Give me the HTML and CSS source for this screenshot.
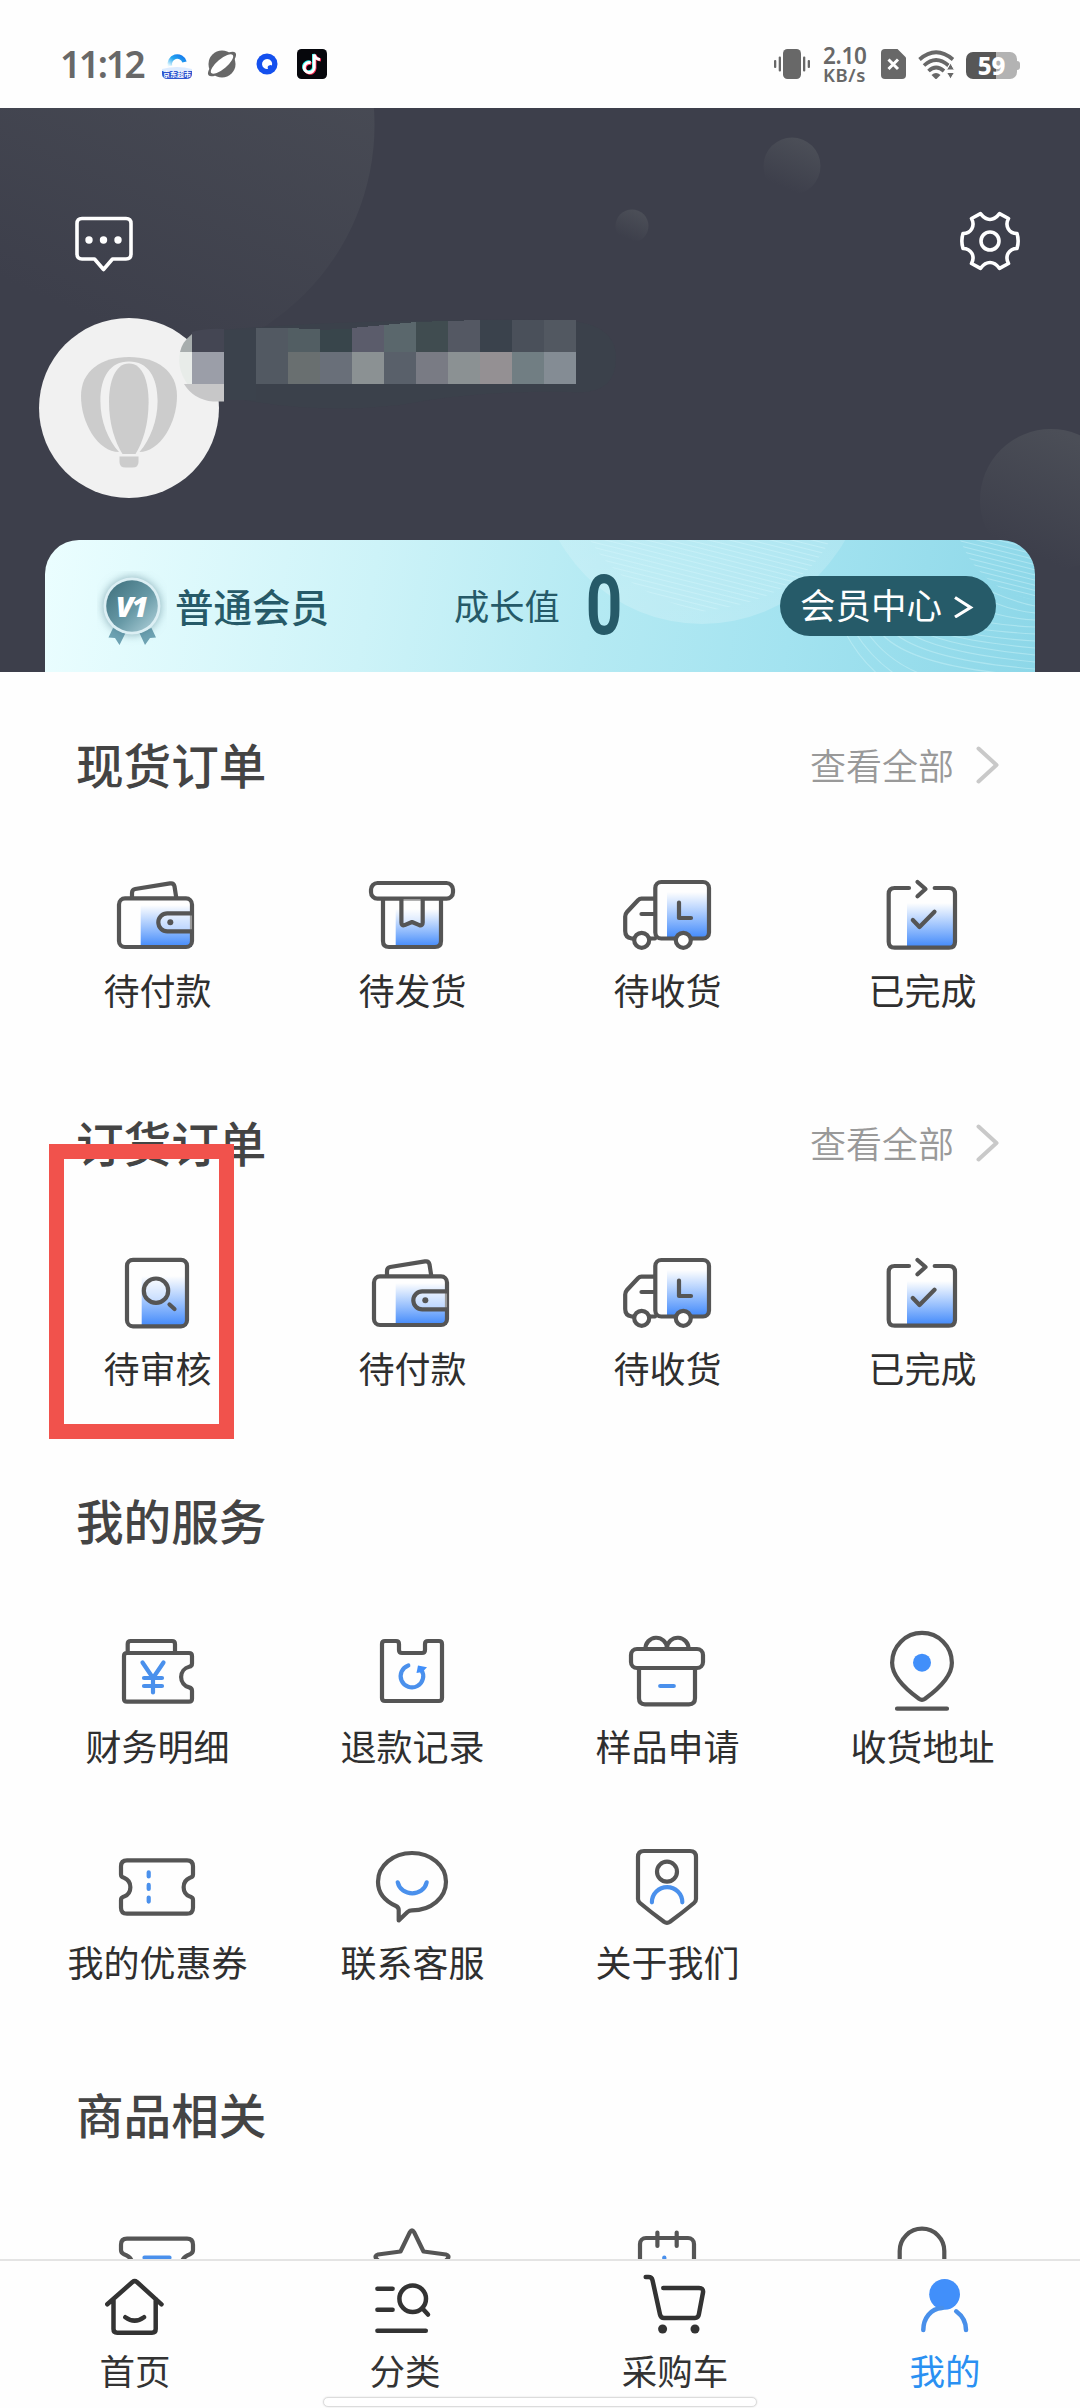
FILE: index.html
```html
<!DOCTYPE html>
<html lang="zh-CN">
<head>
<meta charset="utf-8">
<title>我的</title>
<link rel="stylesheet" href="styles.css">
</head>
<body>
<svg class="defs" width="0" height="0" aria-hidden="true">
  <defs>
    <linearGradient id="blue" x1="0" y1="0" x2="0" y2="1">
      <stop offset="0" stop-color="#4791ff" stop-opacity="0"/>
      <stop offset="1" stop-color="#4289fa"/>
    </linearGradient>
    <symbol id="i-wallet" viewBox="0 0 99 100">
      <path class="fade" d="M32.7 40H84V82H32.7z"/>
      <rect x="11" y="33.4" width="73" height="48.6" rx="6"/>
      <path d="M24 33V28q0-3.400 3.200-4L62 18.400q3.800-.6 4.500 3L68.300 33"/>
      <path class="glass" d="M84 48.300H59.300a9 9 0 0 0 0 18H84"/>
      <circle class="dot" cx="62.300" cy="57.300" r="3"/>
    </symbol>
    <symbol id="i-parcel" viewBox="0 0 99 100">
      <path class="fade" d="M32.700 44H78V82H32.700z"/>
      <rect x="8" y="18" width="82" height="15.700" rx="6.500"/>
      <path d="M20 34V76q0 6 6 6H72q6 0 6-6V34"/>
      <path class="glass" d="M38.400 34V57.500q0 3.500 3.200 2.600L49 57l7.400 3.100q3.300.9 3.300-2.600V34"/>
    </symbol>
    <symbol id="i-truck" viewBox="0 0 99 100">
      <path class="fade" d="M49 27H90V73H49z"/>
      <rect x="37.300" y="17" width="53.700" height="56.500" rx="6"/>
      <path d="M37 33.700H23.500q-2 0-3.500 1.500L9 47q-1.800 2-1.800 4.500V66q0 6.500 6.500 7.500H37M23.500 49H37M61 37.500V53H73"/>
      <circle class="wheel" cx="23.700" cy="75.300" r="7.500"/>
      <circle class="wheel" cx="65.300" cy="75.300" r="7.500"/>
    </symbol>
    <symbol id="i-done" viewBox="0 0 99 100">
      <path class="fade" d="M34 38H81V82H34z"/>
      <path d="M36 23H21.700q-6 0-6 6V76.700q0 6 6 6H76q6 0 6-6V29q0-6-6-6H61.700"/>
      <path d="M44.500 17L52.500 24L44.500 31.300M39.800 55L46.500 62L61.500 46.800"/>
    </symbol>
    <symbol id="i-audit" viewBox="0 0 99 100">
      <path class="fade" d="M33.700 33H79V83H33.700z"/>
      <rect x="19" y="16.800" width="60" height="66.500" rx="6"/>
      <circle class="glass" cx="48" cy="47.700" r="12.200"/>
      <path d="M61.500 61.500L66.500 66"/>
    </symbol>
    <symbol id="i-finance" viewBox="0 0 99 100">
      <path d="M19 32H81q3 0 3 3V42.500q0 2.800-2.800 3.300a10.600 10.600 0 0 0 0 20.600q2.800.7 2.800 3.300V77.700q0 3-3 3H19q-3 0-3-3V35q0-3 3-3zM19.700 31V23q0-3 3-3H64q3 0 3 3V31"/>
      <path class="accent" d="M34.500 41.500L45 57L55.500 41.500M45 57V71.500M36 57H54M36 65H54"/>
    </symbol>
    <symbol id="i-refund" viewBox="0 0 99 100">
      <path d="M22 20H33q3 0 3 3V29q0 3 3 3H59q3 0 3-3V23q0-3 3-3H76q3 0 3 3V77q0 3-3 3H22q-3 0-3-3V23q0-3 3-3z"/>
      <path class="accent" d="M45.300 44.400A11.300 11.300 0 1 0 58.300 48.800"/>
      <path class="solid" d="M55 44.500L64 46.300L59.500 51L53.500 52z"/>
    </symbol>
    <symbol id="i-gift" viewBox="0 0 99 100">
      <rect x="13" y="28" width="72" height="19" rx="6"/>
      <path d="M21 47V77.300q0 6 6 6H71q6 0 6-6V47M27.500 28A10.700 10.700 0 0 1 49 27A10.700 10.700 0 0 1 70.500 28"/>
      <path class="accent" d="M42.200 65H55.800"/>
    </symbol>
    <symbol id="i-pin" viewBox="0 0 99 100">
      <path d="M19.100 41.800a29.900 29.900 0 0 1 59.800 0c0 14-15 27.400-26.900 36q-3 2-6 0C34.100 69.200 19.100 55.800 19.100 41.800zM24 87.700H74"/>
      <circle class="solid" cx="49" cy="41.700" r="9"/>
    </symbol>
    <symbol id="i-coupon" viewBox="0 0 99 100">
      <path d="M19 23.300H79q6 0 6 6V37.500q0 2.500-3 3.200a10.200 10.200 0 0 0 0 18.900q3 1 3 3.400V70.700q0 6-6 6H19q-6 0-6-6V63q0-2.400 3-3.400a10.200 10.200 0 0 0 0-18.900q-3-.7-3-3.200V29.300q0-6 6-6z"/>
      <path class="accent" d="M40.700 35.300V39.400M40.700 47.900V52M40.700 60.500V64.600"/>
    </symbol>
    <symbol id="i-chat" viewBox="0 0 99 100">
      <path d="M49 73.400C68 73.400 83 60.700 83 44.700S68 16 49 16S15 28.700 15 44.700C15 56 22 64 33 69q2.700 1.300 2.700 4V83.500L44.500 75q1.800-1.600 4.500-1.600z"/>
      <path class="accent" d="M34.700 45.300C38 60 60.500 60 63.700 45.300"/>
    </symbol>
    <symbol id="i-about" viewBox="0 0 99 100">
      <path d="M26 14H72q6 0 6 6V62q0 2.300-2 4Q64 76 52 84.800q-3 2-6 0Q34 76 22 66q-2-1.700-2-4V20q0-6 6-6z"/>
      <circle cx="49" cy="34.700" r="10"/>
      <path class="accent" d="M33.900 65.300a15.200 15.200 0 0 1 30.400 0"/>
    </symbol>
    <symbol id="i-ticket" viewBox="0 0 99 100">
      <path d="M19 23.700H79q6 0 6 6V35q0 3-3 4.200Q73.500 42 73.500 50.500T82 62q3 1 3 3.400V71q0 6-6 6H19q-6 0-6-6V65q0-2.400 3-3.400Q24.500 59 24.500 50.500T16 39.200q-3-1.200-3-4.200V29.700q0-6 6-6z"/>
      <path class="accent" d="M36.500 42.500H61.500"/>
    </symbol>
    <symbol id="i-star" viewBox="0 0 99 100">
      <path d="M47 17q2-3.500 4 0l9.500 19.500L83 39.500q4 1 1.500 4.500L68 60l4 23L49 72L26 83l4-23L13.500 44q-2.500-3.500 1.500-4.500L37.500 36.500z"/>
    </symbol>
    <symbol id="i-calendar" viewBox="0 0 99 100">
      <rect x="22" y="23" width="54" height="56" rx="6"/>
      <path d="M39.400 17.500V31M58.700 17.500V31"/>
      <path class="accent" d="M46.300 42.500V60"/>
    </symbol>
    <symbol id="i-bag" viewBox="0 0 99 100">
      <path d="M26.700 80V36a22.300 22.300 0 0 1 44.600 0V80"/>
    </symbol>
  </defs>
</svg>

<header class="status">
  <div class="status-left">
    <span class="clock">11:12</span>
    <svg class="app a1" width="30" height="30" viewBox="0 0 30 30">
      <defs><linearGradient id="qb" x1="1" y1="0" x2="0" y2="1"><stop offset="0" stop-color="#1478ee"/><stop offset=".5" stop-color="#27a8ee"/><stop offset="1" stop-color="#e6f8ff"/></linearGradient></defs>
      <path d="M0 20h30v5q0 5-6 5H6q-6 0-6-5z" fill="#2d55cf"/>
      <path d="M0 20q15-4 30 0v2H0z" fill="#dcebff"/>
      <path d="M8 17A7.500 7.500 0 1 1 22.500 13" fill="none" stroke="url(#qb)" stroke-width="4.500"/>
      <text x="15" y="28" text-anchor="middle" class="tiny">京东超市</text>
    </svg>
    <svg class="app a2" width="30" height="28" viewBox="0 0 30 28">
      <circle cx="15" cy="14" r="13.500" fill="#686868"/>
      <ellipse cx="15" cy="14" rx="17.500" ry="6.500" transform="rotate(-40 15 14)" fill="#686868"/>
      <ellipse cx="15" cy="14" rx="14" ry="5" transform="rotate(-40 15 14)" fill="#fff"/>
    </svg>
    <svg class="app a3" width="22" height="22" viewBox="0 0 22 22">
      <circle cx="11" cy="11" r="10.500" fill="#1450ee"/><path d="M11 6a5 5 0 1 0 1 9.900q-1-2.500 1-3.400t3 0A5 5 0 0 0 11 6z" fill="#fff"/>
    </svg>
    <svg class="app a4" width="30" height="30" viewBox="0 0 30 30">
      <rect width="30" height="30" rx="4.500" fill="#06070c"/>
      <g fill="none" stroke-width="3"><path stroke="#25f4ee" d="M13 13a5 5 0 1 0 3.500 5V5q1 4.500 5.500 5"/><path stroke="#fe2c55" d="M14.500 14.500a5 5 0 1 0 3.500 5V6q1.500 4.500 6 5"/><path stroke="#fff" d="M13.700 13.800a5 5 0 1 0 3.500 5V5.500q1 4.500 5.700 5"/></g>
    </svg>
  </div>
  <div class="status-right">
    <svg width="36" height="30" viewBox="0 0 36 30" fill="#686868"><rect x="9" width="18" height="30" rx="4.500"/><rect y="11" width="2.300" height="8" rx="1"/><rect x="4.700" y="7.500" width="2.300" height="15" rx="1"/><rect x="29" y="7.500" width="2.300" height="15" rx="1"/><rect x="33.700" y="11" width="2.300" height="8" rx="1"/></svg>
    <div class="speed"><b>2.10</b><span>KB/s</span></div>
    <svg class="sim" width="25" height="30" viewBox="0 0 25 30"><path fill="#686868" d="M4 0H16.500L25 8.500V26q0 4-4 4H4q-4 0-4-4V4q0-4 4-4z"/><path d="M7.500 10.500l9.500 9.500M17 10.500L7.500 20" stroke="#fff" stroke-width="3"/></svg>
    <svg class="wifi" width="37" height="29" viewBox="0 0 37 29"><g fill="none" stroke="#686868" stroke-width="3.700"><path d="M1.500 9.500Q18 -5 35 9.500M6 15.500Q18 4.500 30.500 15.500M10.500 21Q18 14 26 21"/></g><path d="M13.500 25Q18 21 22.500 25L18 29.500z" fill="#686868"/><path d="M28.500 20l4-7 4 7zM28.500 22.500h8l-4 6.500z" fill="#686868" stroke="#fff" stroke-width="1"/></svg>
    <div class="battery"><span>59</span></div>
  </div>
</header>

<section class="hero">
  <svg class="bubbles" width="1080" height="564" viewBox="0 108 1080 564">
    <defs><linearGradient id="bub" x1=".75" y1=".1" x2=".4" y2=".9"><stop offset="0" stop-color="#4b4e57"/><stop offset="1" stop-color="#3d3f4b"/></linearGradient></defs>
    <g fill="url(#bub)"><circle cx="135" cy="125" r="239.500"/><circle cx="792" cy="166" r="28.500"/><circle cx="632" cy="226" r="16.500"/><circle cx="1051" cy="500" r="71"/></g>
  </svg>
  <div class="tools">
    <svg width="60" height="60" viewBox="0 0 60 60" fill="none" stroke="#fff" stroke-width="3.600" stroke-linejoin="round"><path d="M8 5.500H52q5 0 5 5V41q0 5-5 5H38.500L29.500 56.500L20.500 46H8q-5 0-5-5V10.500q0-5 5-5z"/><g fill="#fff" stroke="none"><circle cx="15" cy="27" r="3.700"/><circle cx="29.500" cy="27" r="3.700"/><circle cx="44" cy="27" r="3.700"/></g></svg>
    <svg width="62" height="62" viewBox="-31 -31 62 62" fill="none" stroke="#fff" stroke-width="3.600" stroke-linejoin="round"><path d="M-18.500 -22.500L-9.500 -27.300Q-5 -21.500 0 -21.500T9.500 -27.300L18.500 -22.500C14.500 -15 19 -7.500 27 -7.500Q29.300 0 27 7.500C19 7.500 14.500 15 18.500 22.500L9.500 27.300Q5 21.500 0 21.500T-9.500 27.300L-18.500 22.500C-14.500 15 -19 7.500 -27 7.500Q-29.300 0 -27 -7.500C-19 -7.500 -14.500 -15 -18.500 -22.500z"/><circle r="9"/></svg>
  </div>
  <div class="profile">
    <svg width="620" height="180" viewBox="39 318 620 180">
      <circle cx="129" cy="408" r="90" fill="#f1f1f1"/>
      <g fill="#ccc"><path d="M129 357C101 357 81 371 81 396C81 423 98 452 119 452H139C160 452 177 423 177 396C177 371 157 357 129 357z"/>
      <path fill="#f1f1f1" d="M129 361.500C110 361.500 100.400 377 100.400 401C100.400 421 108 440 119 452L121.500 456H137L139.500 452C150 440 157.600 421 157.600 401C157.600 377 148 361.500 129 361.500z"/>
      <path d="M129 363.500C115 363.500 109 382 109 402C109 424 115 442 122.500 454H135.500C143 442 148.600 424 148.600 402C148.600 382 143 363.500 129 363.500z"/>
      <path d="M119.500 456.500H138.500V462q0 5.500-6 5.500H125.500q-6 0-6-5.500z"/></g>
      <path d="M222 330Q360 318 560 320Q616 322 616 358Q616 396 570 392Q480 390 400 405Q310 415 224 396z" fill="#3a424c" opacity=".65"/>
      <path d="M224 330H256V400H224z" fill="#3b424c"/>
      <path d="M192 332Q206 328 224 329V352H192z" fill="#444653"/>
      <path d="M180 352Q182 342 192 334V352z" fill="#a7adad"/>
      <path d="M180 352H192V390Q176 372 180 352z" fill="#e8ece9"/>
      <path d="M192 352H224V384H192z" fill="#9b9ea8"/>
      <path d="M184 384H224V401.500H213Q194 400 184 384z" fill="#c7c7c8"/>
      <g shape-rendering="crispEdges">
      <path d="M256 328h32v56h-32z" fill="#525962"/><path d="M288 328l32 1.500V352h-32z" fill="#525e63"/><path d="M320 330l32-1.500V352h-32z" fill="#38454b"/><path d="M352 328l32-3V352h-32z" fill="#5b5c6b"/><path d="M384 325l32-3V352h-32z" fill="#5a676c"/><path d="M416 322l32-1V352h-32z" fill="#404c50"/><path d="M448 321l32-1V352h-32z" fill="#545863"/><path d="M480 320h32v64h-32z" fill="#3a424c"/><path d="M512 320h32v32h-32z" fill="#4a505a"/><path d="M544 320h32v32h-32z" fill="#525861"/>
      <path d="M288 352h32v32h-32z" fill="#696f70"/><path d="M320 352h32v32h-32z" fill="#696f79"/><path d="M352 352h32v32h-32z" fill="#8b9193"/><path d="M384 352h32v32h-32z" fill="#59606a"/><path d="M416 352h32v32h-32z" fill="#797b84"/><path d="M448 352h32v32h-32z" fill="#8b9193"/><path d="M480 352h32v32h-32z" fill="#949093"/><path d="M512 352h32v32h-32z" fill="#717e83"/><path d="M544 352h32v32h-32z" fill="#848c94"/>
      </g>
    </svg>
  </div>
  <div class="member">
    <svg class="waves" width="990" height="132" viewBox="45 540 990 132">
      <defs>
        <linearGradient id="orb" x1="0" y1="0" x2="0" y2="1"><stop offset="0" stop-color="#fff" stop-opacity="0"/><stop offset="1" stop-color="#fff" stop-opacity=".2"/></linearGradient>
        <pattern id="ring" width="8" height="5" patternUnits="userSpaceOnUse" patternTransform="rotate(14)"><path d="M0 2.500H8" stroke="#d8f6fb" stroke-width="1" opacity=".4"/></pattern>
      </defs>
      <circle cx="702" cy="460" r="164" fill="url(#orb)"/>
      <path d="M590 540H830Q800 600 700 612Q620 590 590 540z" fill="url(#ring)"/>
      <path d="M960 540H1035V600Q980 590 960 540z" fill="url(#ring)"/>
      <g fill="none" stroke="#c8f1f8" stroke-width="1.200" opacity=".5">
        <path d="M845 632Q865 670 900 690M855 632Q880 672 925 690M867 632Q895 672 950 682M880 632Q910 668 1035 676M893 632Q925 660 1035 669M907 632Q940 653 1035 662M922 632Q955 647 1035 655M938 632Q970 642 1035 648M955 630Q985 638 1035 641M972 628Q1000 632 1035 634M985 622Q1010 626 1035 627M992 613Q1015 619 1035 620M995 603Q1015 611 1035 613M992 592Q1015 602 1035 606"/>
      </g>
    </svg>
    <svg class="medal" width="70" height="80" viewBox="97 571 70 80">
      <defs><linearGradient id="md" x1="0" y1="0" x2="1" y2="1"><stop offset="0" stop-color="#3c6d7a"/><stop offset=".55" stop-color="#6799a6"/><stop offset="1" stop-color="#b4d4dd"/></linearGradient></defs>
      <path d="M113 628L108.500 637.500L115 638L119.500 645L126 632zM151.500 628L156 637.500L150 638L145 645L139 632z" fill="#6ea3b3"/>
      <circle class="glow" cx="132" cy="606" r="28.500" fill="#dceff4"/>
      <circle cx="132" cy="606" r="25.800" fill="url(#md)"/>
      <text x="131" y="617" text-anchor="middle" class="v1">V1</text>
    </svg>
    <span class="level">普通会员</span>
    <span class="growth">成长值</span>
    <span class="points">0</span>
    <a class="center-btn"><span>会员中心</span><svg width="20" height="24" viewBox="0 0 20 24"><path d="M1 3.500L16.500 13.500L1 23" fill="none" stroke="#fff" stroke-width="3.200"/></svg></a>
  </div>
</section>

<main>
  <section class="block">
    <div class="head"><h2>现货订单</h2><a class="more">查看全部<svg width="24" height="38" viewBox="0 0 24 38"><path d="M2.500 2.500L20.500 19L2.500 35.500"/></svg></a></div>
    <div class="grid">
      <div class="item"><svg class="ico"><use href="#i-wallet"/></svg><span>待付款</span></div>
      <div class="item"><svg class="ico"><use href="#i-parcel"/></svg><span>待发货</span></div>
      <div class="item"><svg class="ico"><use href="#i-truck"/></svg><span>待收货</span></div>
      <div class="item"><svg class="ico"><use href="#i-done"/></svg><span>已完成</span></div>
    </div>
  </section>
  <section class="block">
    <div class="head"><h2>订货订单</h2><a class="more">查看全部<svg width="24" height="38" viewBox="0 0 24 38"><path d="M2.500 2.500L20.500 19L2.500 35.500"/></svg></a></div>
    <div class="grid">
      <div class="item"><svg class="ico"><use href="#i-audit"/></svg><span>待审核</span></div>
      <div class="item"><svg class="ico"><use href="#i-wallet"/></svg><span>待付款</span></div>
      <div class="item"><svg class="ico"><use href="#i-truck"/></svg><span>待收货</span></div>
      <div class="item"><svg class="ico"><use href="#i-done"/></svg><span>已完成</span></div>
    </div>
    <div class="marker"></div>
  </section>
  <section class="block">
    <div class="head"><h2>我的服务</h2></div>
    <div class="grid">
      <div class="item"><svg class="ico"><use href="#i-finance"/></svg><span>财务明细</span></div>
      <div class="item"><svg class="ico"><use href="#i-refund"/></svg><span>退款记录</span></div>
      <div class="item"><svg class="ico"><use href="#i-gift"/></svg><span>样品申请</span></div>
      <div class="item"><svg class="ico"><use href="#i-pin"/></svg><span>收货地址</span></div>
      <div class="item"><svg class="ico"><use href="#i-coupon"/></svg><span>我的优惠券</span></div>
      <div class="item"><svg class="ico"><use href="#i-chat"/></svg><span>联系客服</span></div>
      <div class="item"><svg class="ico"><use href="#i-about"/></svg><span>关于我们</span></div>
    </div>
  </section>
  <section class="block">
    <div class="head"><h2>商品相关</h2></div>
    <div class="grid">
      <div class="item"><svg class="ico"><use href="#i-ticket"/></svg></div>
      <div class="item"><svg class="ico"><use href="#i-star"/></svg></div>
      <div class="item"><svg class="ico"><use href="#i-calendar"/></svg></div>
      <div class="item"><svg class="ico"><use href="#i-bag"/></svg></div>
    </div>
  </section>
</main>

<nav class="tabs">
  <a class="tab"><svg viewBox="0 0 90 80"><path d="M17.300 39.300L42.500 17q2.200-1.700 4.400 0L71.500 39.300M23.500 34V64q0 3.700 3.700 3.700H62q3.700 0 3.700-3.700V34M35.300 52.200Q44.700 59 54 52.200"/></svg><span>首页</span></a>
  <a class="tab"><svg viewBox="0 0 90 80"><path d="M17.400 23.700H32.600M17.400 44.700H32.600M17.400 65.700H65.800M62.500 43.500L68 49.500"/><circle cx="52.700" cy="33.700" r="13.300"/></svg><span>分类</span></a>
  <a class="tab"><svg viewBox="0 0 90 80"><path d="M15.700 12H18.500q3.300 0 4 3.200L30 49.500q.8 3.500 4 3.500H65q3.200 0 3.800-3.300L73 27.500q.7-4.500-4-4.500H33.300"/><g class="wh"><circle cx="32.600" cy="64" r="4.500"/><circle cx="65" cy="64" r="4.500"/></g></svg><span>采购车</span></a>
  <a class="tab active"><svg viewBox="0 0 90 80"><circle class="hd" cx="44.600" cy="29.300" r="15.400"/><path d="M23.300 65C23.300 53 31 43.500 42 43M56.200 46.300Q66 53.500 66 65"/></svg><span>我的</span></a>
  <div class="home-bar"></div>
</nav>
</body>
</html>
```
FILE: styles.css
```css
* { box-sizing: border-box; }
body {
  margin: 0;
  width: 1080px;
  height: 2408px;
  overflow: hidden;
  display: flex;
  flex-direction: column;
  background: #fefefe;
  color: #333;
  font-family: "Noto Sans CJK SC", "Noto Sans", sans-serif;
}
svg { display: block; flex: none; }
.defs { position: absolute; }

/* status bar */
.status {
  height: 108px;
  flex: none;
  padding: 20px 60px 0 60px;
  display: flex;
  justify-content: space-between;
  align-items: center;
  font-family: "Noto Sans", sans-serif;
  color: #686868;
}
.status-left, .status-right { display: flex; align-items: center; }
.clock { font-size: 37px; font-weight: 600; letter-spacing: -2.300px; line-height: 40px; width: 102px; white-space: nowrap; }
.a2 { margin-left: 15px; }
.a3 { margin-left: 19px; }
.a4 { margin-left: 19px; }
.tiny { font-size: 7px; font-weight: 700; fill: #fff; font-family: "Noto Sans CJK SC", sans-serif; }
.speed { width: 46px; margin-left: 13px; display: flex; flex-direction: column; white-space: nowrap; }
.speed b { font-size: 22.500px; line-height: 20px; font-weight: 600; letter-spacing: -.3px; }
.speed span { font-size: 18.500px; line-height: 17px; font-weight: 600; letter-spacing: .6px; }
.sim { margin-left: 12px; }
.wifi { margin-left: 12px; }
.battery {
  position: relative;
  width: 51px;
  height: 27px;
  margin: 2px 3px 0 11px;
  border-radius: 7px;
  background: linear-gradient(90deg, #575757 0 30.500px, #b3b3b3 30.500px);
  color: #fff;
  text-align: center;
}
.battery::after { content: ""; position: absolute; left: 51px; top: 9px; width: 3px; height: 9px; border-radius: 0 3px 3px 0; background: #b3b3b3; }
.battery span { font-size: 24px; font-weight: 800; line-height: 27px; display: block; }

/* profile header */
.hero { position: relative; height: 564px; flex: none; background: #3d3f4b; display: flex; flex-direction: column; }
.bubbles { position: absolute; left: 0; top: 0; }
.tools { position: relative; display: flex; justify-content: space-between; padding: 102px 59px 0 74px; height: 210px; }
.tools svg:first-child { margin-top: 3px; }
.profile { position: relative; padding-left: 39px; height: 222px; }
.member {
  position: relative;
  width: 990px;
  height: 132px;
  margin: 0 auto;
  padding: 0 39px 0 52px;
  border-radius: 34px 34px 0 0;
  overflow: hidden;
  display: flex;
  align-items: center;
  background: linear-gradient(100deg, #ebfeff 0%, #cdf3f8 33%, #b5eaf3 55%, #a3e3f0 75%, #8dd7e8 100%);
  color: #265a68;
}
.waves { position: absolute; left: 0; top: 0; }
.member > *:not(.waves) { position: relative; }
.medal { margin-top: 10px; }
.glow { filter: drop-shadow(0 0 5px rgba(60, 110, 125, .55)); }
.v1 { font: italic 900 29px "Noto Sans", sans-serif; fill: #fff; letter-spacing: -2px; }
.level { margin-left: 8px; font-size: 38.500px; font-weight: 500; line-height: 48px; margin-bottom: 3px; width: 154px; white-space: nowrap; }
.growth { margin-left: 125px; font-size: 35.300px; line-height: 48px; margin-bottom: 2px; width: 106px; white-space: nowrap; }
.points { margin-left: 16px; width: 56px; font: 700 83px/132px Roboto, sans-serif; text-align: center; transform: scaleX(.77); }
.center-btn {
  margin-left: auto;
  width: 216px;
  height: 60px;
  padding: 0 22px 0 20px;
  border-radius: 30px;
  background: #265b69;
  color: #fff;
  font-size: 35.500px;
  display: flex;
  justify-content: space-between;
  align-items: center;
}
.center-btn span { line-height: 56px; height: 60px; }

/* sections */
main { height: 1587px; flex: none; overflow: hidden; }
.block { position: relative; }
.head { height: 162px; padding: 57px 80px 0 76px; display: flex; justify-content: space-between; align-items: flex-start; }
h2 { margin: 0; font-size: 47.600px; line-height: 70px; font-weight: 500; color: #444; }
.more { display: flex; align-items: center; gap: 22px; font-size: 36px; line-height: 70px; color: #999; font-weight: 350; }
.more svg { margin-top: 2px; }
.more path { fill: none; stroke: #c9c9c9; stroke-width: 4; stroke-linecap: round; stroke-linejoin: round; }
.grid { display: grid; grid-template-columns: repeat(4, 255px); padding: 0 30px; grid-auto-rows: 216px; }
.item { display: flex; flex-direction: column; align-items: center; padding-top: 31px; }
.item span { font-size: 36px; line-height: 49px; white-space: nowrap; color: #2f2f2f; }
.ico { width: 99px; height: 100px; fill: none; stroke: #555; stroke-width: 4.200px; stroke-linecap: round; stroke-linejoin: round; }
.fade { fill: url(#blue); stroke: none; }
.glass { fill: rgba(255, 255, 255, .4); }
.dot { fill: #555; stroke: none; }
.wheel { fill: #fff; }
.accent { stroke: #4a90ec; }
.solid { fill: #418ffa; stroke: none; }
.marker { position: absolute; left: 49px; top: 94px; width: 185px; height: 295px; border: 15px solid #f1524c; }

/* tab bar */
.tabs { position: relative; height: 149px; flex: none; border-top: 2px solid #e4e4e4; display: grid; grid-template-columns: repeat(4, 1fr); background: #fefefe; }
.tab { display: flex; flex-direction: column; align-items: center; padding-top: 4px; font-size: 35.500px; }
.tab svg { width: 90px; height: 80px; fill: none; stroke: #333; stroke-width: 4.500px; stroke-linecap: round; stroke-linejoin: round; }
.tab span { line-height: 49px; }
.wh circle { fill: #333; stroke: none; }
.active { color: #2a90f2; }
.active svg { stroke: #488fea; }
.active .hd { fill: #418ffa; stroke: none; }
.home-bar { position: absolute; left: 323px; top: 136px; width: 434px; height: 10px; border: 1px solid #dcdcdc; border-radius: 5px; background: #fff; box-shadow: 0 0 2px #ddd; }
```
